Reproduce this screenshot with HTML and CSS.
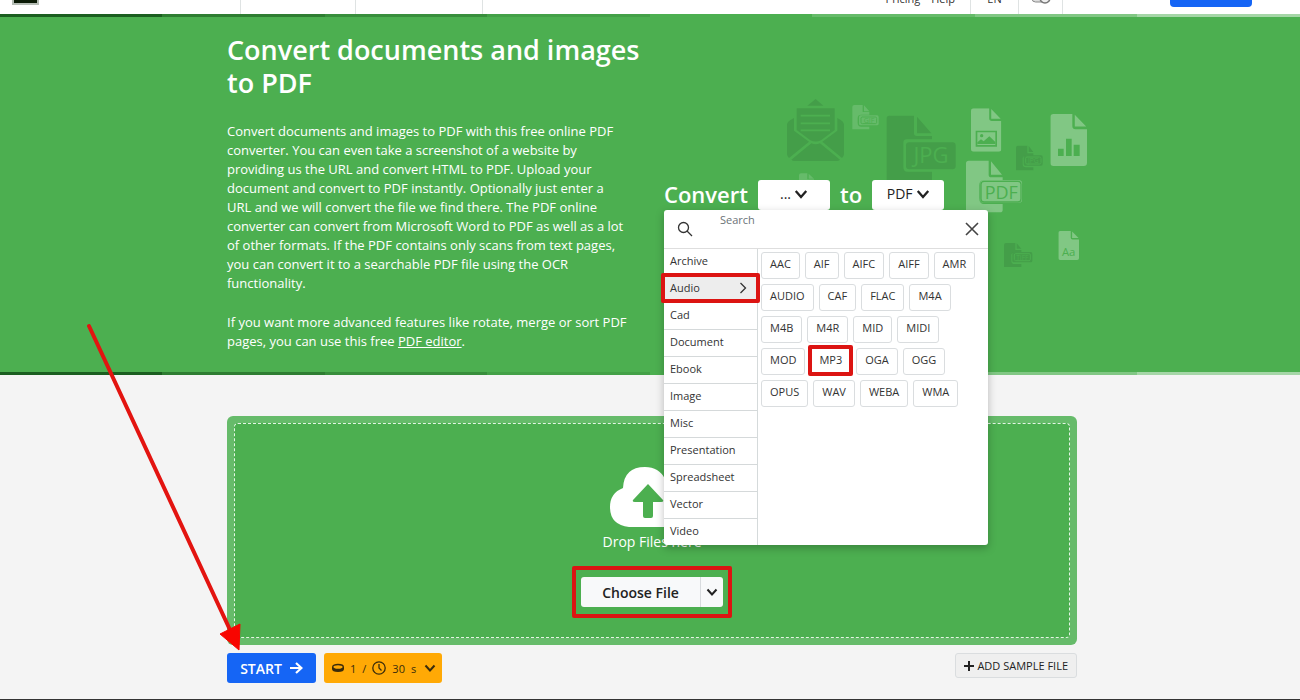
FILE: index.html
```html
<!DOCTYPE html>
<html lang="en">
<head>
<meta charset="utf-8">
<title>Convert documents and images to PDF</title>
<link rel="stylesheet" href="styles.css">
</head>
<body>
<svg class="sprite" aria-hidden="true">
  <symbol id="chev" viewBox="0 0 12 12"><path d="M1.500 3.500L6 8.500L10.500 3.500" fill="none" stroke="currentColor"/></symbol>
  <symbol id="page" viewBox="0 0 90 130" preserveAspectRatio="none"><path d="M8 0H54V30Q54 38 62 38H90V122Q90 130 82 130H8Q0 130 0 122V8Q0 0 8 0ZM60 2L88 31H60Z"/></symbol>
</svg>
<header class="top">
  <div class="logo"></div>
  <div class="cell cell-a"></div>
  <div class="cell cell-b"></div>
  <div class="cell cell-c"></div>
  <nav class="nav"><a href="#">Pricing</a><a href="#">Help</a></nav>
  <a class="lang" href="#">EN</a>
  <div class="theme"><svg width="20" height="12" viewBox="0 0 20 12"><rect x="1" y="2" width="18" height="7" rx="3.500" fill="#ddd" stroke="#888"/><circle cx="14" cy="5" r="5" fill="#eee" stroke="#777" stroke-width="1.500"/></svg></div>
  <a class="signup" href="#" aria-label="Sign up"></a>
</header>
<div class="stripe"></div>
<section class="hero">
  <div class="wrap cols">
    <div class="intro">
      <h1>Convert documents and images to PDF</h1>
      <p>Convert documents and images to PDF with this free online PDF converter. You can even take a screenshot of a website by providing us the URL and convert HTML to PDF. Upload your document and convert to PDF instantly. Optionally just enter a URL and we will convert the file we find there. The PDF online converter can convert from Microsoft Word to PDF as well as a lot of other formats. If the PDF contains only scans from text pages, you can convert it to a searchable PDF file using the OCR functionality.</p>
      <p>If you want more advanced features like rotate, merge or sort PDF pages, you can use this free <a href="#">PDF editor</a>.</p>
    </div>
    <div class="picker">
      <svg class="art" width="340" height="190" viewBox="0 0 1020 570" aria-hidden="true">
        <g fill="#449e49">
          <path d="M112 47L137 27L160 47Z"/>
          <path d="M51 104Q51 94 72 84V122L117 155L57 204Q51 198 51 192ZM222 104Q222 94 202 84V122L157 155L216 204Q222 198 222 192ZM64 209L124 160Q137 166 150 160L210 209Q206 213 200 213H74Q68 213 64 209Z"/>
          <path d="M80 55H194V120L153 151Q137 158 121 151L80 120Z"/>
          <path d="M358 77H432V130Q432 138 440 138H486V148H410Q400 148 400 158V230Q400 245 412 245H486V270H350V85Q350 77 358 77ZM441 80L484 130H441Z"/>
          <rect x="408" y="157" width="149" height="81" rx="10"/>
          <path d="M744 167H772V190H790V198H766Q758 198 758 206V222Q758 232 768 232H790V241H738V173Q738 167 744 167ZM776 168L790 186H776Z"/>
          <rect x="761" y="196" width="57" height="31" rx="5"/>
          <path d="M708 459H736V480H754V488H732Q724 488 724 496V512Q724 522 734 522H754V531H702V465Q702 459 708 459ZM740 460L754 476H740Z"/>
          <rect x="727" y="486" width="60" height="31" rx="5"/>
        </g>
        <g stroke="#4caf50" fill="none" stroke-width="5"><path d="M92 77H180M92 100H180M92 121H180M76 194L121 158M198 194L153 158"/></g>
        <g fill="#81c784">
          <use href="#page" x="603" y="55" width="91" height="130"/>
          <use href="#page" x="841" y="72" width="110" height="156"/>
          <use href="#page" x="865" y="423" width="62" height="87"/>
          <path d="M596 212H656V254Q656 262 664 262H698V271H642Q628 271 628 286V324Q628 342 642 342H698V360Q698 367 690 367H596Q588 367 588 359V220Q588 212 596 212ZM663 214L696 254H663Z"/>
          <rect x="631" y="271" width="125" height="67" rx="9"/>
        </g>
        <g fill="#66bb6a">
          <path d="M253 45H278V66H298V74H274Q263 74 263 84V98Q263 110 274 110H298V118H247V51Q247 45 253 45ZM282 46L298 64H282Z"/>
          <rect x="267" y="76" width="59" height="30" rx="5"/>
          <path d="M93 250H112V268H132V290H87V256Q87 250 93 250ZM116 251L132 266H116Z"/>
        </g>
        <g fill="#4caf50">
          <path d="M864 176H881V198H864ZM888 146H905V198H888ZM911 164H929V198H911Z"/>
          <path d="M617 122H681V170H617ZM622 127V165H676V127Z" fill-rule="evenodd"/>
          <path d="M622 162V157L633 148L641 154L658 139L676 156V162Z"/><circle cx="635" cy="137" r="5"/>
        </g>
        <g fill="none" stroke="#4caf50" stroke-width="3"><rect x="273" y="81" width="47" height="20" rx="4"/><rect x="767" y="201" width="46" height="21" rx="4"/><rect x="733" y="491" width="48" height="21" rx="4"/><rect x="633" y="274" width="120" height="62" rx="9" stroke-width="4"/></g>
        <g class="art-text" text-anchor="middle">
          <text x="483" y="220" font-size="66">JPG</text>
          <text x="694" y="326" font-size="54">PDF</text>
          <text x="896" y="497" font-size="34">Aa</text>
          <text x="297" y="99" font-size="21">GIF</text>
          <text x="790" y="219" font-size="20">JPG</text>
          <text x="757" y="509" font-size="20">TIFF</text>
        </g>
      </svg>
      <div class="choice">
        <span>Convert</span>
        <button class="fmt" type="button">... <svg width="14" height="14"><use href="#chev"/></svg></button>
        <span class="to">to</span>
        <button class="fmt" type="button">PDF <svg width="14" height="14"><use href="#chev"/></svg></button>
        <div class="menu">
          <div class="menu-head">
            <svg width="16" height="16" viewBox="0 0 16 16" fill="none" stroke="#333" stroke-width="1.300"><circle cx="6.500" cy="6.500" r="5"/><path d="M10 10L15 15"/></svg>
            <label class="search">Search<input type="text"></label>
            <button class="close" type="button" aria-label="Close"><svg width="14" height="14" viewBox="0 0 14 14" stroke="#444" stroke-width="1.600"><path d="M1 1L13 13M13 1L1 13"/></svg></button>
          </div>
          <div class="menu-body">
            <ul class="cats">
              <li>Archive</li>
              <li class="active">Audio<svg width="8" height="12" viewBox="0 0 8 12" fill="none" stroke="#333" stroke-width="1.300"><path d="M1.500 1L6.500 6L1.500 11"/></svg><i class="mark"></i></li>
              <li>Cad</li><li>Document</li><li>Ebook</li><li>Image</li><li>Misc</li><li>Presentation</li><li>Spreadsheet</li><li>Vector</li><li>Video</li>
            </ul>
            <div class="chips">
              <button type="button">AAC</button><button type="button">AIF</button><button type="button">AIFC</button><button type="button">AIFF</button><button type="button">AMR</button>
              <button type="button">AUDIO</button><button type="button">CAF</button><button type="button">FLAC</button><button type="button">M4A</button>
              <button type="button">M4B</button><button type="button">M4R</button><button type="button">MID</button><button type="button">MIDI</button>
              <button type="button">MOD</button><button type="button">MP3<i class="mark"></i></button><button type="button">OGA</button><button type="button">OGG</button>
              <button type="button">OPUS</button><button type="button">WAV</button><button type="button">WEBA</button><button type="button">WMA</button>
            </div>
          </div>
        </div>
      </div>
    </div>
  </div>
</section>
<div class="stripe"></div>
<main class="wrap">
  <div class="drop"><div class="drop-in">
    <svg width="84" height="60" viewBox="0 0 84 60"><path d="M19 60Q0 58 0 40Q0 26 13 21Q14 0 35 0Q49 0 55 12Q68 8 71 22Q84 26 84 41Q84 58 66 60Z" fill="#fff"/><path d="M38 17L53 33Q54 35 51 35H43V49Q43 51 41 51H35Q33 51 33 49V35H25Q22 35 23 33Z" fill="#4caf50"/></svg>
    <p>Drop Files here</p>
    <div class="file"><button class="choose" type="button">Choose File</button><button class="more" type="button" aria-label="More sources"><svg width="12" height="12"><use href="#chev"/></svg></button><i class="mark"></i></div>
  </div></div>
  <div class="actions">
    <button class="start" type="button">START <svg width="13" height="12" viewBox="0 0 13 12" fill="none" stroke="#fff" stroke-width="2.200"><path d="M0 6H11M6 1L11.500 6L6 11"/></svg></button>
    <button class="cost" type="button">
      <svg width="12" height="10" viewBox="0 0 12 10"><path d="M0 4V6Q0 9 6 9T12 6V4Z" fill="#3a2c0c"/><ellipse cx="6" cy="4" rx="5.300" ry="2.500" fill="#ffa905" stroke="#3a2c0c" stroke-width="1.400"/></svg>
      <span>1</span><span>/</span>
      <svg width="14" height="14" viewBox="0 0 14 14" fill="none" stroke="#3a2c0c" stroke-width="1.300"><circle cx="7" cy="7" r="6.200"/><path d="M7 3V7L9.500 9.500"/></svg>
      <span>30</span><span>s</span>
      <svg class="cost-chev" width="12" height="12"><use href="#chev"/></svg>
    </button>
    <button class="sample" type="button"><svg width="10" height="10" viewBox="0 0 10 10" stroke="#222" stroke-width="2"><path d="M5 0V10M0 5H10"/></svg>ADD SAMPLE FILE</button>
  </div>
</main>
<footer class="foot"></footer>
<svg class="arrow" width="160" height="330" viewBox="0 0 160 330" aria-hidden="true"><path d="M4 4L146 310" stroke="#e31410" stroke-width="4" stroke-linecap="round"/><path d="M154 328L135 312L155 302Z" fill="#f80500" stroke="#f80500" stroke-width="1"/></svg>
</body>
</html>
```
FILE: styles.css
```css
* { box-sizing: border-box; }
body { margin: 0; min-height: 100vh; position: relative; display: flex; flex-direction: column; background: #f4f4f4; font-family: "Open Sans", sans-serif; font-size: 14px; color: #222; overflow: hidden; }
button { font: inherit; color: inherit; border: 0; padding: 0; cursor: pointer; }
svg { flex: none; }
.sprite { position: absolute; width: 0; height: 0; }

.top { display: flex; align-items: flex-end; height: 14px; background: #fff; overflow: hidden; font-size: 11px; color: #333; }
.top a { color: inherit; text-decoration: none; }
.logo { width: 27px; height: 5px; margin: 0 0 9px 12px; background: #0b1a06; border: solid #b5bdb5; border-width: 0 2px 2px; align-self: flex-start; }
.cell { align-self: stretch; border-right: 1px solid #dfe3e3; }
.cell-a { width: 202px; }
.cell-b { width: 115px; }
.cell-c { width: 127px; }
.nav { display: flex; gap: 11px; margin-left: auto; padding: 0 15px 6px 0; line-height: 18px; }
.lang { align-self: stretch; display: flex; align-items: flex-end; justify-content: center; width: 49px; padding-bottom: 6px; line-height: 18px; border: solid #dfe3e3; border-width: 0 1px; }
.theme { align-self: stretch; display: flex; align-items: flex-end; justify-content: center; width: 44px; padding-bottom: 9px; border-right: 1px solid #dfe3e3; }
.signup { width: 82px; height: 20px; margin: 0 48px 7px 107px; border-radius: 4px; background: #1565f5; }

.stripe { height: 3px; flex: none; background: linear-gradient(90deg, #1b5e20 12.5%, #2e7d32 12.5% 25%, #388e3c 25% 37.5%, #43a047 37.5% 50%, #4caf50 50% 62.5%, #66bb6a 62.5% 75%, #81c784 75% 87.5%, #a5d6a7 87.5%); }
.wrap { width: calc(100% - 32px); max-width: 850px; margin: 0 auto; position: relative; left: 2px; }
.hero { background: #4caf50; color: #fff; padding: 16px 0 21px; }
.cols { display: grid; grid-template-columns: 414px 1fr; gap: 23px; }
h1 { margin: 0 0 23px; font-size: 27px; line-height: 33px; font-weight: 600; }
.intro p { max-width: 403px; margin: 0 0 20px; font-size: 13px; line-height: 19px; }
.intro p:last-child { margin: 0; }
.intro a { color: inherit; }
.picker { position: relative; padding-top: 147px; }
.art { position: absolute; left: 106px; top: 57px; }
.art-text { fill: #4caf50; font-family: "Open Sans", sans-serif; }
.choice { position: relative; display: flex; align-items: center; font-size: 22px; font-weight: 600; line-height: 28px; }
.to { margin: 0 10px; }
.choice span { padding-bottom: 2px; }
.fmt { display: flex; align-items: center; justify-content: center; gap: 3px; width: 72px; height: 30px; padding-bottom: 2px; border-radius: 3px; background: #fff; color: #222; font-size: 14px; font-weight: 400; }
.fmt svg { stroke-width: 2px; }
.choice span:first-child { margin-right: 10px; }

.menu { position: absolute; z-index: 5; top: 30px; left: 0; width: 324px; background: #fff; color: #333; border-radius: 3px; box-shadow: 0 3px 8px rgba(0, 0, 0, .25); font-size: 11px; font-weight: 400; line-height: 16px; }
.menu-head { display: flex; align-items: center; height: 39px; padding: 0 9px 0 13px; border-bottom: 1px solid #dedede; }
.search { flex: 1; align-self: stretch; display: flex; flex-direction: column; margin-left: 27px; padding-top: 2px; color: #6b7378; }
.search input { border: 0; outline: 0; width: 100%; height: 18px; padding: 0; background: none; font: inherit; }
.close { display: flex; background: none; }
.menu-body { display: flex; }
.cats { list-style: none; margin: 0; padding: 0; width: 94px; border-right: 1px solid #d5dadb; }
.cats li { position: relative; display: flex; align-items: center; justify-content: space-between; height: 27px; padding: 0 10px 2px 6px; border-bottom: 1px solid #d5d9da; }
.cats li:last-child { height: 26px; border-bottom: 0; }
.cats .active { background: #ededed; }
.chips { flex: 1; display: flex; flex-wrap: wrap; align-content: flex-start; gap: 5px; padding: 3px 8px 3px 3px; }
.chips button { position: relative; height: 27px; padding: 0 8px 3px; border: 1px solid #dadddf; border-radius: 3px; background: #fff; }
.mark { position: absolute; border: 4px solid #dc1412; border-radius: 2px; pointer-events: none; }
.cats .mark { inset: -3px -3px -1px; }
.chips .mark { inset: -4px -3px -2px; }

main { flex: none; padding-top: 41px; }
.drop { padding: 7px; border-radius: 6px; background: #66bb6a; }
.drop-in { display: flex; flex-direction: column; align-items: center; padding: 43px 0 30px; border: 1px dashed #e4f5e4; border-radius: 4px; background: #4caf50; color: #fff; }
.drop p { margin: 5px 0 25px; line-height: 20px; }
.file { position: relative; display: flex; height: 30px; border-radius: 3px; background: #f8f9fa; color: #222; }
.choose { width: 120px; background: none; font-weight: 600; border-right: 1px solid #d8dbde; }
.more { display: flex; align-items: center; justify-content: center; width: 22px; background: none; }
.file .mark { inset: -11px -9px; }
.actions { display: flex; align-items: flex-start; gap: 8px; padding: 8px 0 15px; }
.start { display: flex; align-items: center; justify-content: center; gap: 8px; width: 89px; height: 30px; border-radius: 3px; background: #1565f5; color: #fff; font-weight: 600; }
.cost { display: flex; align-items: center; gap: 6px; height: 30px; width: 118px; padding: 0 6px 0 8px; border-radius: 3px; background: #ffa905; color: #3a2c0c; font-size: 11px; }
.cost-chev { margin-left: auto; }
.more svg, .cost-chev { stroke-width: 2px; }
.sample { display: flex; align-items: center; justify-content: center; gap: 3px; margin-left: auto; height: 25px; padding: 0 8px; border: 1px solid #dadddf; border-radius: 3px; background: #efefef; font-size: 11px; }
.foot { height: 1px; background: #333; margin-top: auto; }
.arrow { position: absolute; z-index: 6; left: 85px; top: 322px; }
```
